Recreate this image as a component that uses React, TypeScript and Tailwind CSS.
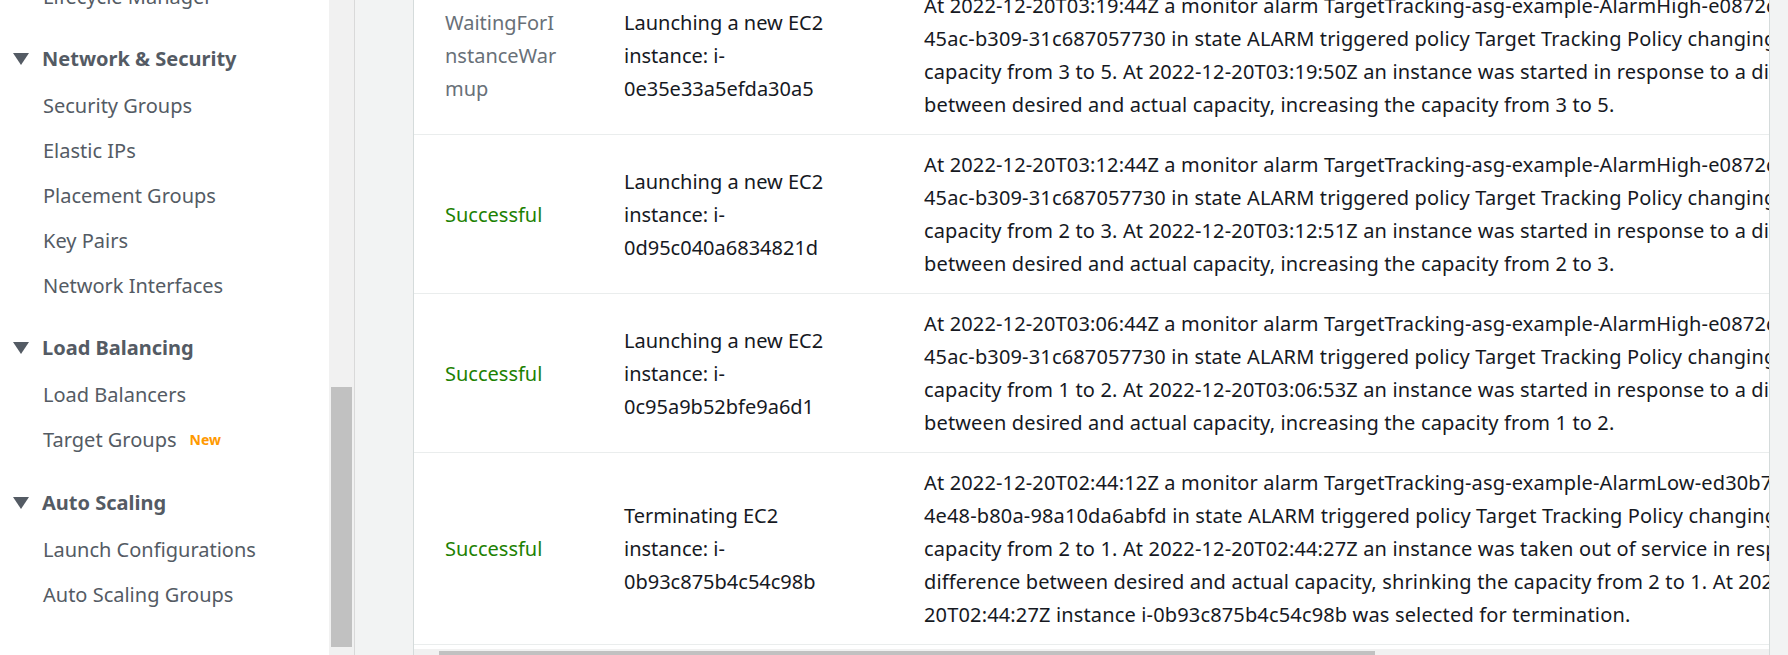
import React from 'react';

type Row = {
  status: string[];
  ok: boolean;
  action: string[];
  detail: string[];
};

const rows: Row[] = [
  {
    status: ['WaitingForI', 'nstanceWar', 'mup'],
    ok: false,
    action: ['Launching a new EC2', 'instance: i-', '0e35e33a5efda30a5'],
    detail: [
      'At 2022-12-20T03:19:44Z a monitor alarm TargetTracking-asg-example-AlarmHigh-e0872c1f-9d3a-',
      '45ac-b309-31c687057730 in state ALARM triggered policy Target Tracking Policy changing the desired',
      'capacity from 3 to 5. At 2022-12-20T03:19:50Z an instance was started in response to a difference',
      'between desired and actual capacity, increasing the capacity from 3 to 5.',
    ],
  },
  {
    status: ['Successful'],
    ok: true,
    action: ['Launching a new EC2', 'instance: i-', '0d95c040a6834821d'],
    detail: [
      'At 2022-12-20T03:12:44Z a monitor alarm TargetTracking-asg-example-AlarmHigh-e0872c1f-9d3a-',
      '45ac-b309-31c687057730 in state ALARM triggered policy Target Tracking Policy changing the desired',
      'capacity from 2 to 3. At 2022-12-20T03:12:51Z an instance was started in response to a difference',
      'between desired and actual capacity, increasing the capacity from 2 to 3.',
    ],
  },
  {
    status: ['Successful'],
    ok: true,
    action: ['Launching a new EC2', 'instance: i-', '0c95a9b52bfe9a6d1'],
    detail: [
      'At 2022-12-20T03:06:44Z a monitor alarm TargetTracking-asg-example-AlarmHigh-e0872c1f-9d3a-',
      '45ac-b309-31c687057730 in state ALARM triggered policy Target Tracking Policy changing the desired',
      'capacity from 1 to 2. At 2022-12-20T03:06:53Z an instance was started in response to a difference',
      'between desired and actual capacity, increasing the capacity from 1 to 2.',
    ],
  },
  {
    status: ['Successful'],
    ok: true,
    action: ['Terminating EC2', 'instance: i-', '0b93c875b4c54c98b'],
    detail: [
      'At 2022-12-20T02:44:12Z a monitor alarm TargetTracking-asg-example-AlarmLow-ed30b7e2-5c1f-',
      '4e48-b80a-98a10da6abfd in state ALARM triggered policy Target Tracking Policy changing the desired',
      'capacity from 2 to 1. At 2022-12-20T02:44:27Z an instance was taken out of service in response to a',
      'difference between desired and actual capacity, shrinking the capacity from 2 to 1. At 2022-12-',
      '20T02:44:27Z instance i-0b93c875b4c54c98b was selected for termination.',
    ],
  },
];

const Caret = () => (
  <svg width="16" height="12" viewBox="0 0 16 12" className="shrink-0">
    <polygon points="0,0 16,0 8,12" fill="#545b64" />
  </svg>
);

const Item = ({ label, badge }: { label: string; badge?: string }) => (
  <div className="flex h-[45px] items-center pl-[43px] text-[20px] text-[#545b64]">
    <span>{label}</span>
    {badge && <span className="ml-[13px] text-[14px] font-bold text-[#ff9900]">{badge}</span>}
  </div>
);

const Header = ({ label, gap = 'mt-[16px]' }: { label: string; gap?: string }) => (
  <div className={`${gap} flex h-[48px] items-center pl-[13px] text-[20px] font-bold text-[#545b64]`}>
    <Caret />
    <span className="ml-[13px]">{label}</span>
  </div>
);

export default function App() {
  return (
    <div className="flex h-[655px] w-[1788px] overflow-hidden bg-white font-['Noto_Sans',sans-serif]">
      {/* Sidebar */}
      <aside className="w-[329px] shrink-0 overflow-hidden">
        <div className="-mt-[26px]">
          <Item label="Lifecycle Manager" />

          <Header label="Network & Security" />
          <Item label="Security Groups" />
          <Item label="Elastic IPs" />
          <Item label="Placement Groups" />
          <Item label="Key Pairs" />
          <Item label="Network Interfaces" />

          <Header label="Load Balancing" />
          <Item label="Load Balancers" />
          <Item label="Target Groups" badge="New" />

          <Header label="Auto Scaling" gap="mt-[17px]" />
          <Item label="Launch Configurations" />
          <Item label="Auto Scaling Groups" />
        </div>
      </aside>

      {/* Sidebar scrollbar */}
      <div className="w-[25px] shrink-0 bg-[#f1f1f1] px-[2px] pt-[387px]">
        <div className="h-[260px] bg-[#c1c1c1]" />
      </div>

      <div className="w-[59px] shrink-0 border-l border-[#d9d9d9] bg-[#f2f3f3]" />

      {/* Activity table */}
      <div className="w-[1357px] shrink-0 overflow-hidden border-x border-[#d5dbdb] bg-white">
        <div className="-mt-[24px] w-max">
          {rows.map((row, i) => (
            <div
              key={i}
              className="flex border-b border-[#eaeded] py-[13px] text-[20px] leading-[33px] text-[#16191f]"
            >
              <div className={`w-[210px] shrink-0 self-center pl-[31px] ${row.ok ? 'text-[#1d8102]' : 'text-[#687078]'}`}>
                {row.status.map((s, j) => (
                  <div key={j} className="whitespace-nowrap">{s}</div>
                ))}
              </div>
              <div className="w-[300px] shrink-0 self-center">
                {row.action.map((s, j) => (
                  <div key={j} className="whitespace-nowrap">{s}</div>
                ))}
              </div>
              <div className="w-[1040px] shrink-0 pr-[31px] tracking-[0.15px]">
                {row.detail.map((s, j) => (
                  <div key={j} className="whitespace-nowrap">{s}</div>
                ))}
              </div>
            </div>
          ))}
        </div>
        <div className="mt-[4px] h-[10px] bg-[#f1f1f1] pl-[25px] pt-[2px]">
          <div className="h-[6px] w-[936px] bg-[#c1c1c1]" />
        </div>
      </div>

      <div className="flex-1 bg-[#f2f3f3]" />
    </div>
  );
}
